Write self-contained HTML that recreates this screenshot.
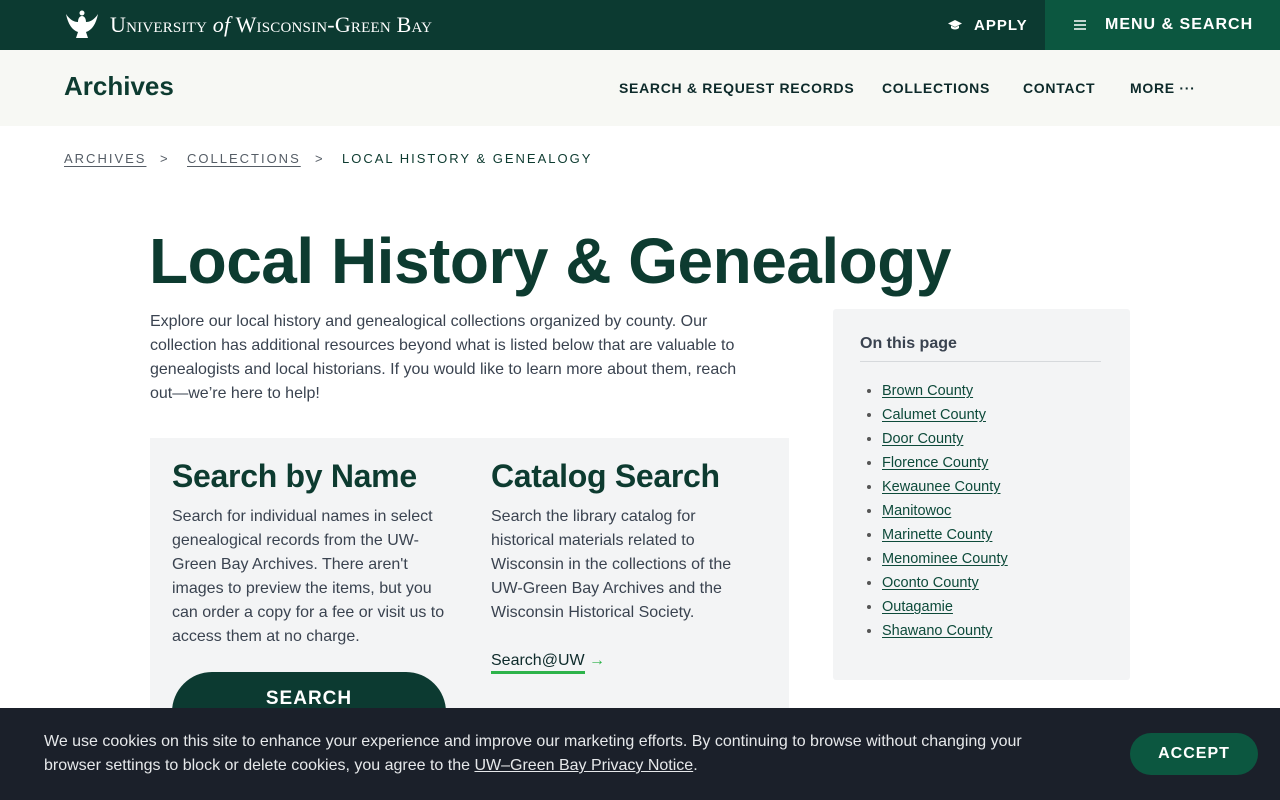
<!DOCTYPE html>
<html><head><meta charset="utf-8"><style>
*{margin:0;padding:0;box-sizing:border-box}
body{width:1280px;height:800px;overflow:hidden;font-family:"Liberation Sans",sans-serif;background:#fff;color:#3a4350;position:relative}
.top{height:50px;background:#0c3a31;position:relative;color:#fff}
.logo{position:absolute;left:64px;top:10px;display:flex;align-items:center}
.logo .t{font-family:"Liberation Serif",serif;font-size:22px;margin-left:10px;letter-spacing:.2px;font-variant:small-caps}
.apply{position:absolute;left:948px;top:0;height:50px;display:flex;align-items:center;font-weight:bold;font-size:15px;letter-spacing:1px}
.menu{position:absolute;left:1045px;top:0;width:235px;height:50px;background:#0c5740;display:flex;align-items:center;font-weight:bold;font-size:16px;letter-spacing:1px}
.sub{height:76px;background:#f7f8f4;position:relative}
.sub h2{position:absolute;left:64px;top:21px;font-size:26px;color:#0d3b30;font-weight:bold}
.nav{position:absolute;top:80px;font-size:14px;font-weight:bold;letter-spacing:.7px;color:#0d2a2a}
.bc{position:absolute;top:151px;font-size:13px;letter-spacing:2px;color:#555d66}
.bc u{text-underline-offset:3px}
h1{position:absolute;left:149px;top:224px;font-size:64px;color:#0d3b30;letter-spacing:-0.5px;font-weight:bold}
.intro{position:absolute;left:150px;top:310px;width:630px;font-size:16px;line-height:24px;color:#3a4350}
.card{position:absolute;left:150px;top:438px;width:639px;height:300px;background:#f3f4f5}
.col{position:absolute;top:20px;width:290px}
.col h3{font-size:32px;color:#0d3b30;letter-spacing:-.3px;margin-bottom:10px}
.col p{font-size:16px;line-height:24px;color:#3a4350}
.btn{position:absolute;left:22px;top:234px;width:274px;height:80px;border-radius:40px;background:#0c3a31;color:#fff;font-weight:bold;font-size:19px;letter-spacing:1px;text-align:center;padding-top:16px}
.side{position:absolute;left:833px;top:309px;width:297px;height:371px;background:#f3f4f5;border-radius:3px}
.side h4{position:absolute;left:27px;top:26px;width:241px;font-size:16px;color:#3a4350;padding-bottom:8px;border-bottom:1px solid #d6d9dc}
.side ul{position:absolute;left:49px;top:70px;font-size:14.5px;line-height:24px;color:#555}
.side li a{color:#0d4a3a;text-decoration:underline;text-underline-offset:2px}
.cookie{position:absolute;left:0;top:708px;width:1280px;height:92px;background:#1b202a;color:#e6e8ea}
.cookie p{position:absolute;left:44px;top:22px;width:1035px;font-size:16px;line-height:24px}
.acc{position:absolute;left:1130px;top:25px;width:128px;height:42px;border-radius:21px;background:#0c5740;color:#fff;font-weight:bold;font-size:16px;letter-spacing:1px;text-align:center;line-height:42px}
</style></head><body>
<div class="top">
 <div class="logo"><svg width="36" height="30" viewBox="0 0 36 30"><path d="M2 4 C4 14 8 20 14 22 L12 28 L24 28 L22 22 C28 20 32 14 34 4 C30 10 26 12 22 12 C22 8 20 6 18 6 C16 6 14 8 14 12 C10 12 6 10 2 4Z" fill="#fff"/><circle cx="18" cy="3" r="2.5" fill="#fff"/></svg><span class="t">University <i style="font-variant:normal">of</i> Wisconsin-Green Bay</span></div>
 <div class="apply"><svg width="14" height="10" viewBox="0 0 14 10" style="margin-right:12px"><path d="M7 0 L14 3.5 L7 7 L0 3.5Z M3 5.5 V8 C5 10 9 10 11 8 V5.5 L7 7.5Z" fill="#fff"/></svg>APPLY</div>
 <div class="menu"><svg width="12" height="10" style="margin-left:29px;margin-right:19px"><path d="M0 1h12M0 5h12M0 9h12" stroke="#fff" stroke-width="1.5"/></svg>MENU &amp; SEARCH</div>
</div>
<div class="sub"><h2>Archives</h2></div>
<div class="nav" style="left:619px">SEARCH &amp; REQUEST RECORDS</div>
<div class="nav" style="left:882px">COLLECTIONS</div>
<div class="nav" style="left:1023px">CONTACT</div>
<div class="nav" style="left:1130px">MORE ···</div>
<div class="bc" style="left:64px"><u>ARCHIVES</u></div>
<div class="bc" style="left:160px;letter-spacing:0">&gt;</div>
<div class="bc" style="left:187px"><u>COLLECTIONS</u></div>
<div class="bc" style="left:315px;letter-spacing:0">&gt;</div>
<div class="bc" style="left:342px;color:#0d3b30">LOCAL HISTORY &amp; GENEALOGY</div>
<h1>Local History &amp; Genealogy</h1>
<div class="intro">Explore our local history and genealogical collections organized by county. Our<br>collection has additional resources beyond what is listed below that are valuable to<br>genealogists and local historians. If you would like to learn more about them, reach<br>out—we’re here to help!</div>
<div class="card">
 <div class="col" style="left:22px;width:280px"><h3>Search by Name</h3><p>Search for individual names in select genealogical records from the UW-Green Bay Archives. There aren't images to preview the items, but you can order a copy for a fee or visit us to access them at no charge.</p></div>
 <div class="col" style="left:341px;width:270px"><h3>Catalog Search</h3><p>Search the library catalog for historical materials related to Wisconsin in the collections of the UW-Green Bay Archives and the Wisconsin Historical Society.</p>
 <p style="margin-top:24px;color:#0d2a2a"><span style="border-bottom:3px solid #2db34a;padding-bottom:2px">Search@UW</span> <span style="color:#2db34a">→</span></p></div>
 <div class="btn">SEARCH</div>
</div>
<div class="side"><h4>On this page</h4>
<ul><li><a>Brown County</a></li><li><a>Calumet County</a></li><li><a>Door County</a></li><li><a>Florence County</a></li><li><a>Kewaunee County</a></li><li><a>Manitowoc</a></li><li><a>Marinette County</a></li><li><a>Menominee County</a></li><li><a>Oconto County</a></li><li><a>Outagamie</a></li><li><a>Shawano County</a></li></ul></div>
<div class="cookie"><p>We use cookies on this site to enhance your experience and improve our marketing efforts. By continuing to browse without changing your browser settings to block or delete cookies, you agree to the <u>UW–Green Bay Privacy Notice</u>.</p><div class="acc">ACCEPT</div></div>
</body></html>
